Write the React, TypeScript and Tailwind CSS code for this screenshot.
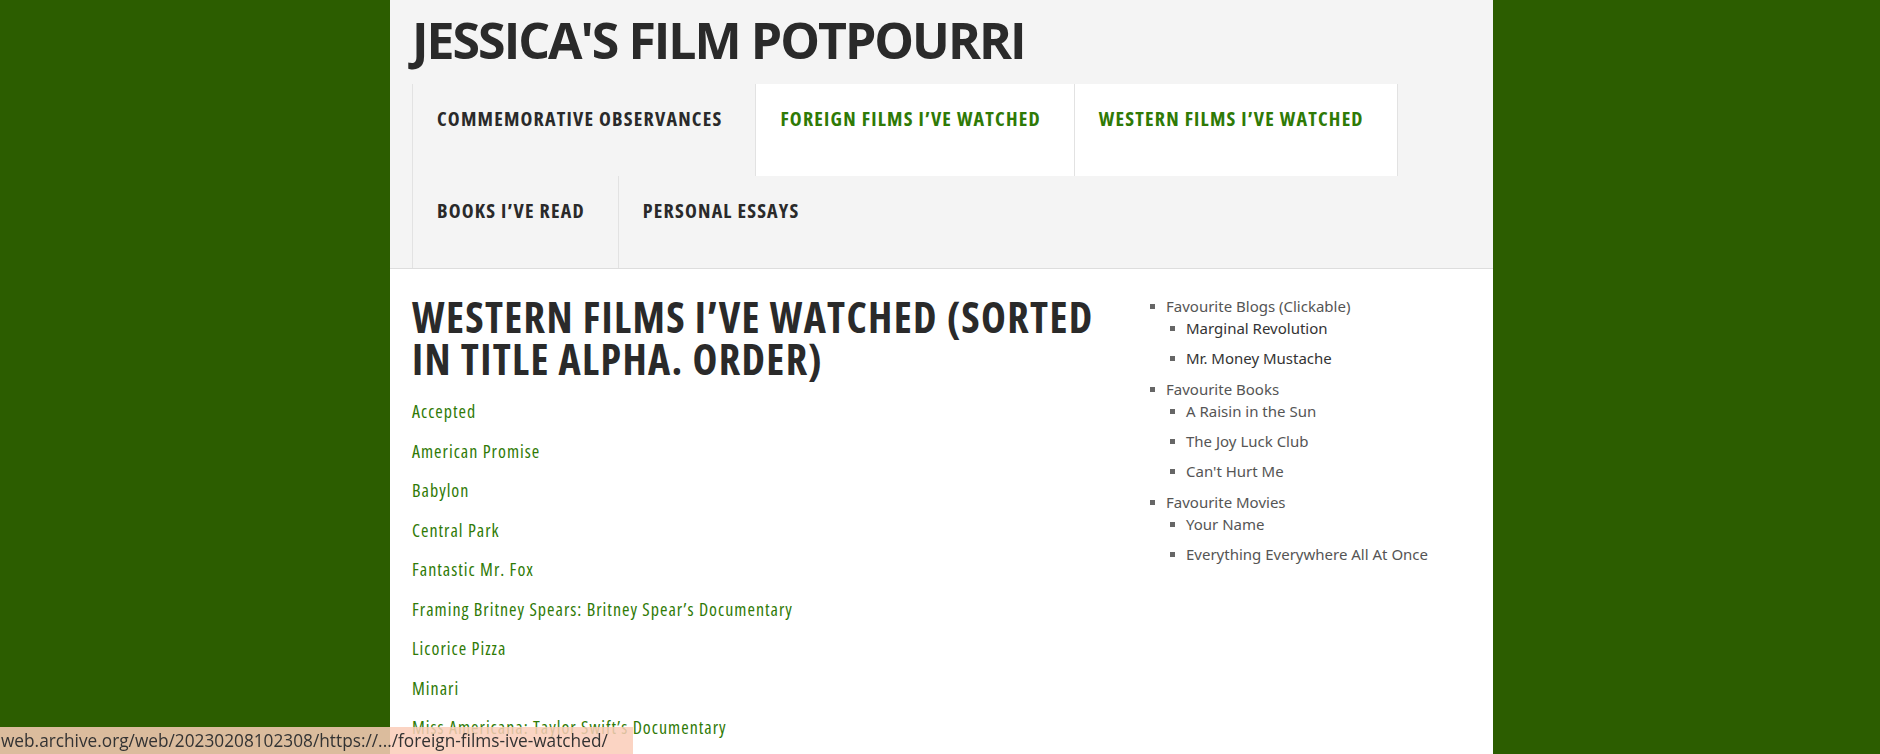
import React from "react";

const films = [
  "Accepted",
  "American Promise",
  "Babylon",
  "Central Park",
  "Fantastic Mr. Fox",
  "Framing Britney Spears: Britney Spear\u2019s Documentary",
  "Licorice Pizza",
  "Minari",
  "Miss Americana: Taylor Swift\u2019s Documentary",
  "Moonlight",
];

type Item = { label: string; dark?: boolean };
const groups: { title: string; items: Item[] }[] = [
  {
    title: "Favourite Blogs (Clickable)",
    items: [
      { label: "Marginal Revolution", dark: true },
      { label: "Mr. Money Mustache", dark: true },
    ],
  },
  {
    title: "Favourite Books",
    items: [{ label: "A Raisin in the Sun" }, { label: "The Joy Luck Club" }, { label: "Can't Hurt Me" }],
  },
  {
    title: "Favourite Movies",
    items: [{ label: "Your Name" }, { label: "Everything Everywhere All At Once" }],
  },
];

function Row({ children, className }: { children: React.ReactNode; className?: string }) {
  return (
    <div className={"flex items-center gap-[11px] leading-[22px] " + (className ?? "")}>
      <span className="w-[5px] h-[5px] bg-[#666] shrink-0" />
      <span>{children}</span>
    </div>
  );
}

const navBase = "block h-[92px] pl-[24px] pr-[33px] pt-[20px] border-l border-[#e2e2e2]";

export default function App() {
  return (
    <div className="h-[754px] overflow-hidden bg-[#2c5d00] font-['Open_Sans',sans-serif]">
      <div className="ml-[390px] w-[1103px] bg-white min-h-[754px]">
        {/* Header */}
        <header className="bg-[#f4f4f4] border-b border-[#dddddd] pl-[22px] h-[269px] flex flex-col">
          <h1 className="pt-[8px] h-[84px] text-[50px] leading-[64px] font-bold text-[#2a2a2a] tracking-[-2px]">
            JESSICA'S FILM POTPOURRI
          </h1>
          <nav className="flex flex-wrap w-[1000px] [font-stretch:75%] font-bold text-[20px] tracking-[1.2px]">
            <a className={navBase + " text-[#2a2a2a]"}>COMMEMORATIVE OBSERVANCES</a>
            <a className={navBase + " text-[#2f7a06] bg-white"}>FOREIGN FILMS I’VE WATCHED</a>
            <a className={navBase + " border-r text-[#2f7a06] bg-white"}>WESTERN FILMS I’VE WATCHED</a>
            <div className="basis-full h-0" />
            <a className={navBase + " text-[#2a2a2a]"}>BOOKS I’VE READ</a>
            <a className={navBase + " text-[#2a2a2a]"}>PERSONAL ESSAYS</a>
          </nav>
        </header>

        {/* Main */}
        <div className="flex pl-[22px]">
          <main className="w-[690px] pt-[27px]">
            <h2 className="text-[42px] leading-[42px] font-bold text-[#2a2a2a] [font-stretch:75%] tracking-[1.35px]">
              WESTERN FILMS I’VE WATCHED (SORTED IN TITLE ALPHA. ORDER)
            </h2>
            <div className="mt-[19px] flex flex-col gap-[15px] [font-stretch:75%] tracking-[1px] text-[18px] leading-[24.5px] text-[#2f7a06]">
              {films.map((f) => (
                <a key={f} className="block">
                  {f}
                </a>
              ))}
            </div>
          </main>
          <aside className="ml-[48px] pt-[26px] text-[15px] text-[#555] font-['Noto_Sans',sans-serif] flex flex-col gap-[9px]">
            {groups.map((g) => (
              <div key={g.title} className="flex flex-col">
                <Row>{g.title}</Row>
                <div className="pl-[20px] flex flex-col gap-[8px]">
                  {g.items.map((it) => (
                    <Row key={it.label} className={it.dark ? "text-[#333]" : ""}>
                      {it.label}
                    </Row>
                  ))}
                </div>
              </div>
            ))}
          </aside>
        </div>
      </div>

      {/* Status bar */}
      <div className="fixed left-0 bottom-0 h-[27px] pl-[1px] pr-[25px] flex items-center bg-[rgba(250,205,185,0.85)] text-[#333] text-[17.25px] font-['Open_Sans',sans-serif]">
        web.archive.org/web/20230208102308/https://.../foreign-films-ive-watched/
      </div>
    </div>
  );
}
